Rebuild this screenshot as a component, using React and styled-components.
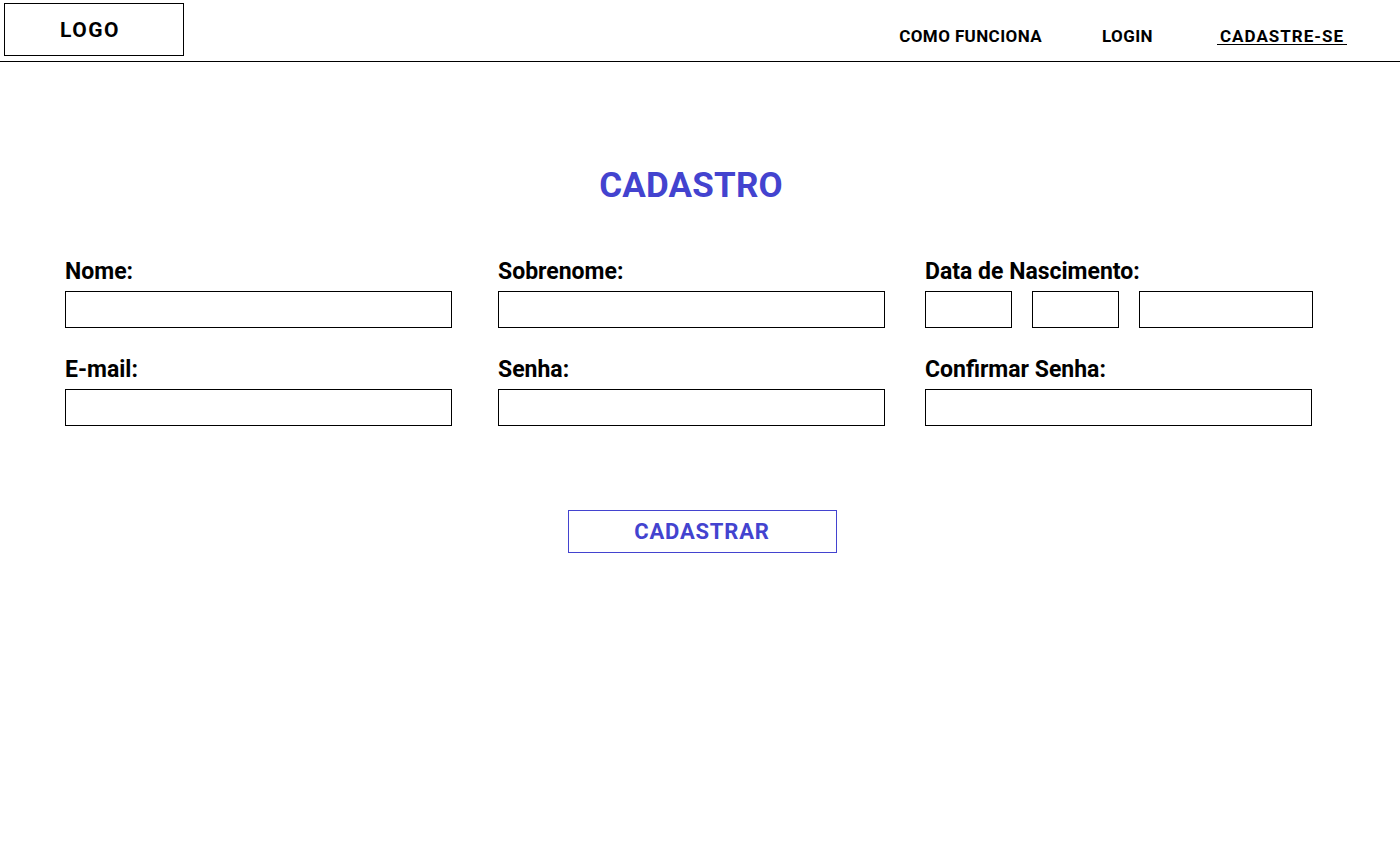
import React from 'react'
import styled, { createGlobalStyle } from 'styled-components'

const GlobalStyle = createGlobalStyle`
  body {
    margin: 0;
    background: #fff;
    font-family: "Roboto", "Liberation Sans", sans-serif;
    color: #000;
  }
`;

const BLUE = '#4343cf';

const fields = [
  { label: 'Nome:' },
  { label: 'Sobrenome:' },
  { label: 'Data de Nascimento:', date: true },
  { label: 'E-mail:' },
  { label: 'Senha:', type: 'password' },
  { label: 'Confirmar Senha:', type: 'password' }
];

const App = () => {
  return (
    <>
      <GlobalStyle />
      <Header>
        <Logo>LOGO</Logo>
        <Nav>
          <NavLink>COMO FUNCIONA</NavLink>
          <NavLink>LOGIN</NavLink>
          <NavLink active>CADASTRE-SE</NavLink>
        </Nav>
      </Header>
      <Main>
        <Form>
          <Title>CADASTRO</Title>
          <Grid>
            {fields.map((f) => (
              <Field key={f.label}>
                <Label>{f.label}</Label>
                {f.date ? (
                  <DateRow>
                    <DateInput width="87px" />
                    <DateInput width="87px" />
                    <DateInput />
                  </DateRow>
                ) : (
                  <Input type={f.type || 'text'} />
                )}
              </Field>
            ))}
          </Grid>
        </Form>
        <Button>CADASTRAR</Button>
      </Main>
    </>
  )
}

export default App

const Header = styled.header`
  display: flex;
  justify-content: space-between;
  align-items: flex-start;
  height: 61px;
  border-bottom: 1px solid #000;
`;

const Logo = styled.div`
  box-sizing: border-box;
  width: 180px;
  height: 53px;
  margin: 3px 0 0 4px;
  padding-right: 8px;
  border: 1px solid #000;
  display: flex;
  align-items: center;
  justify-content: center;
  font-size: 21px;
  font-weight: 700;
  letter-spacing: 1.5px;
`;

const Nav = styled.nav`
  display: flex;
  align-items: flex-start;
  gap: 60px;
  margin: 28px 53px 0 0;
`;

const NavLink = styled.a`
  display: inline-block;
  font-size: 17px;
  font-weight: 700;
  letter-spacing: ${(p) => (p.active ? '1px' : '0.4px')};
  line-height: 16px;
  padding: 0 ${(p) => (p.active ? '3px' : '0')};
  margin-left: ${(p) => (p.active ? '4px' : '0')};
  border-bottom: 1px solid ${(p) => (p.active ? '#000' : 'transparent')};
  cursor: pointer;
`;

const Main = styled.main`
  padding-top: 105px;
`;

const Form = styled.div`
  width: 1248px;
  margin-left: 65px;
`;

const Title = styled.h1`
  margin: 0 0 56px;
  text-align: center;
  font-size: 35px;
  line-height: 36px;
  font-weight: 700;
  letter-spacing: 0.2px;
  color: ${BLUE};
  position: relative;
  left: 2px;
  top: 1px;
`;

const Grid = styled.div`
  display: grid;
  grid-template-columns: 433px 427px 388px;
  row-gap: 29px;
`;

const Field = styled.div`
  display: flex;
  flex-direction: column;
  width: 388px;
`;

const Label = styled.label`
  font-size: 23px;
  line-height: 26px;
  font-weight: 700;
  margin-bottom: 6px;
`;

const DateRow = styled.div`
  display: flex;
  gap: 20px;
`;

const Input = styled.input`
  box-sizing: border-box;
  display: block;
  height: 37px;
  width: 387px;
  margin: 0;
  padding: 0 8px;
  border: 1px solid #000;
  border-radius: 0;
  font-size: 16px;
  font-family: inherit;
  outline: none;
`;

const DateInput = styled(Input)`
  width: ${(p) => p.width || 'auto'};
  flex: ${(p) => (p.width ? `0 0 ${p.width}` : '1 1 0')};
  min-width: 0;
`;

const Button = styled.button`
  display: block;
  box-sizing: border-box;
  width: 269px;
  height: 43px;
  margin: 84px auto 0;
  border: 1px solid ${BLUE};
  background: #fff;
  color: ${BLUE};
  font-family: inherit;
  font-size: 22px;
  font-weight: 700;
  letter-spacing: 0.8px;
  position: relative;
  left: 2px;
  cursor: pointer;
`;
